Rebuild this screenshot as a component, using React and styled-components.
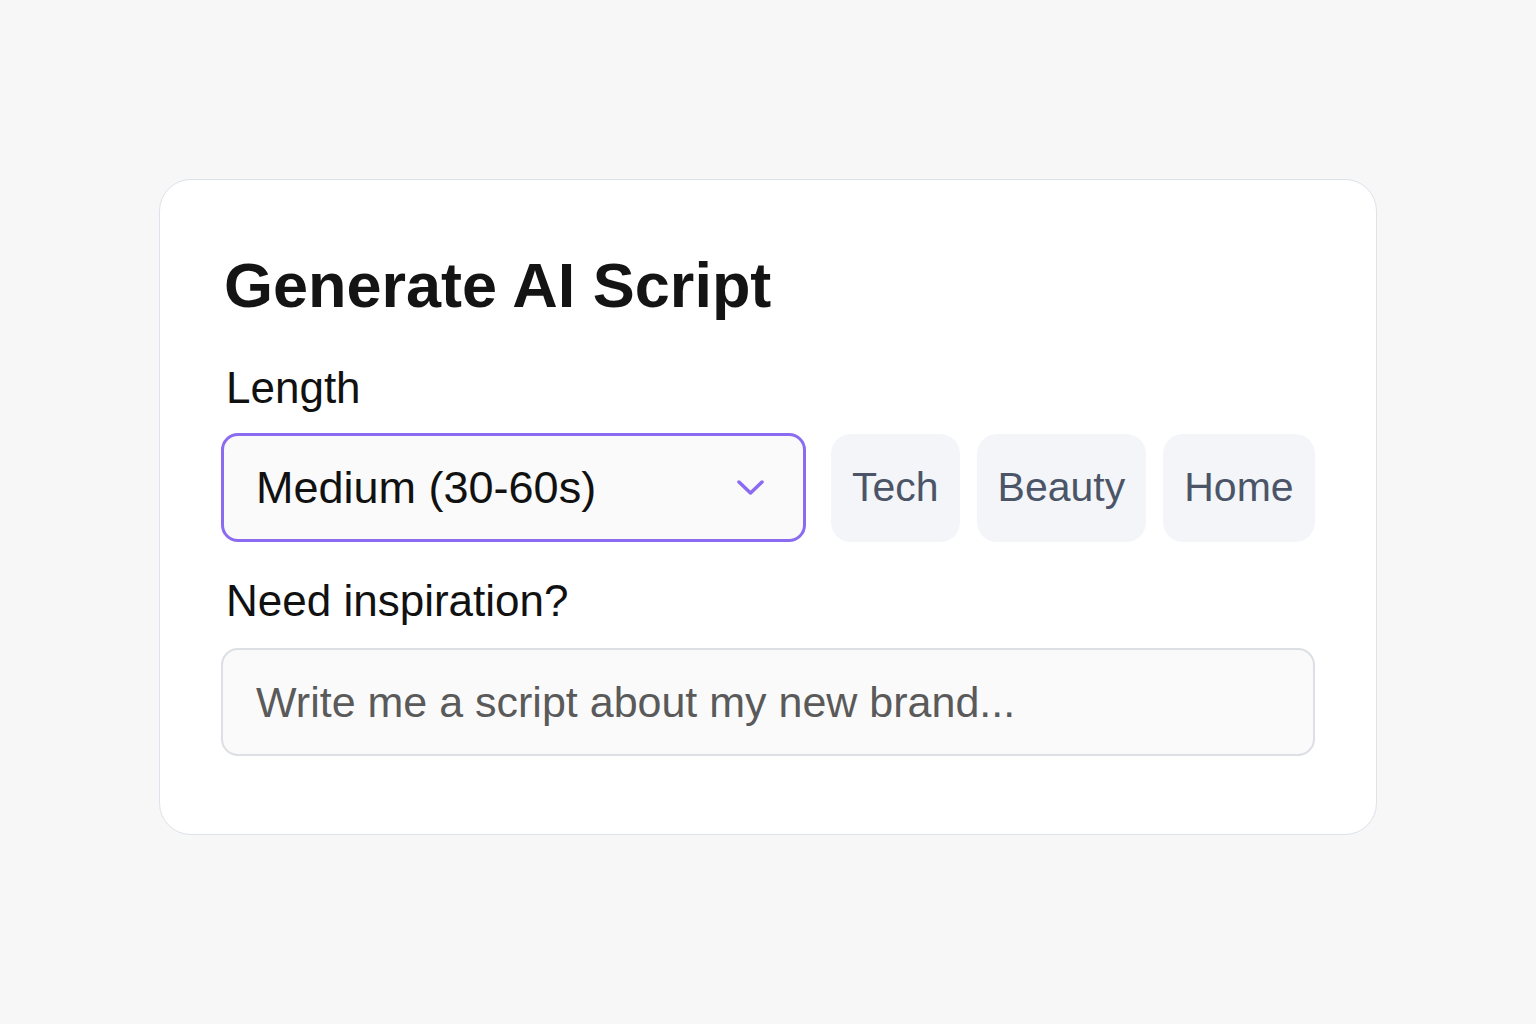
import styled, { createGlobalStyle } from "styled-components"

const GlobalStyle = createGlobalStyle`
    * {
        box-sizing: border-box;
    }
    body {
        margin: 0;
        background: #f7f7f7;
        font-family: "Liberation Sans", Arial, sans-serif;
    }
`

const Page = styled.main`
    min-height: 100vh;
    display: flex;
    justify-content: center;
    align-items: flex-start;
    padding-top: 179px;
`

const Card = styled.section`
    width: 1218px;
    background: #ffffff;
    border: 1px solid #dde3ea;
    border-radius: 32px;
    padding: 67px 61px 78px;
`

const Title = styled.h1`
    margin: 0 0 39px;
    padding-left: 3px;
    font-size: 63px;
    line-height: 76px;
    font-weight: 700;
    color: #141414;
`

const Field = styled.div`
    display: flex;
    flex-direction: column;
    gap: ${(p) => p.$gap}px;
    & + & {
        margin-top: 33px;
    }
`

const Label = styled.label`
    font-size: 44px;
    line-height: 52px;
    color: #111111;
    padding-left: 5px;
`

const Row = styled.div`
    display: flex;
    align-items: center;
`

const Select = styled.button`
    flex: none;
    width: 585px;
    height: 109px;
    margin-right: 25px;
    display: flex;
    align-items: center;
    justify-content: space-between;
    padding: 0 38px 0 32px;
    background: #fafafa;
    border: 3px solid #8b6cf0;
    border-radius: 17px;
    font-family: inherit;
    font-size: 45px;
    color: #111111;
    cursor: pointer;
`

const Chips = styled.div`
    display: flex;
    gap: 17px;
`

const Chip = styled.button`
    height: 108px;
    padding: 0 21px;
    background: #f3f5f9;
    border: 0;
    border-radius: 20px;
    font-family: inherit;
    font-size: 41px;
    color: #4b5567;
    cursor: pointer;
`

const Input = styled.input`
    width: 100%;
    height: 108px;
    padding: 0 33px;
    background: #fafafa;
    border: 2px solid #dcdfe3;
    border-radius: 17px;
    font-family: inherit;
    font-size: 43px;
    color: #222;
    outline: none;
    &::placeholder {
        color: #5a5a5a;
    }
`

const Chevron = () => (
    <svg width="29" height="17" viewBox="0 0 29 17" fill="none">
        <polyline points="3,3 14.5,14 26,3" stroke="#8b6cf0" strokeWidth="3.5" strokeLinecap="round" strokeLinejoin="round" />
    </svg>
)

const categories = ["Tech", "Beauty", "Home"]

export default function App() {
    return (
        <>
            <GlobalStyle />
            <Page>
                <Card>
                    <Title>Generate AI Script</Title>
                    <Field $gap={19}>
                        <Label>Length</Label>
                        <Row>
                            <Select>
                                <span>Medium (30-60s)</span>
                                <Chevron />
                            </Select>
                            <Chips>
                                {categories.map((c) => (
                                    <Chip key={c}>{c}</Chip>
                                ))}
                            </Chips>
                        </Row>
                    </Field>
                    <Field $gap={21}>
                        <Label>Need inspiration?</Label>
                        <Input placeholder="Write me a script about my new brand..." />
                    </Field>
                </Card>
            </Page>
        </>
    )
}
